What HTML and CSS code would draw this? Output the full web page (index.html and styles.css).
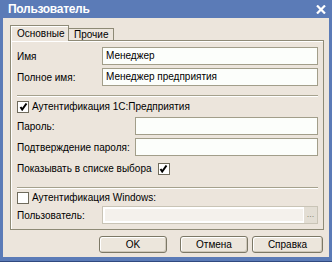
FILE: index.html
```html
<!DOCTYPE html>
<html lang="ru">
<head>
<meta charset="utf-8">
<title>Пользователь</title>
<link rel="stylesheet" href="styles.css">
</head>
<body>
<div class="window">
  <div class="titlebar">
    <span class="title">Пользователь</span>
    <svg class="close" width="10" height="9" viewBox="0 0 10 9"><path d="M1 0.5 L9 8.5 M9 0.5 L1 8.5" stroke="#fff" stroke-width="2.2" fill="none"/></svg>
  </div>
  <div class="client">
    <div class="tabs">
      <div class="tab active">Основные</div>
      <div class="tab">Прочие</div>
    </div>
    <div class="panel">
      <div class="row first">
        <span class="label wide">Имя</span>
        <div class="input">Менеджер</div>
      </div>
      <div class="row">
        <span class="label wide">Полное имя:</span>
        <div class="input">Менеджер предприятия</div>
      </div>
      <div class="sep sep1"></div>
      <div class="check-row cr1">
        <span class="cb"><svg width="9" height="9" viewBox="0 0 9 9"><path d="M1.5 5 L3.2 7.5 L7.5 1.5" stroke="#000" stroke-width="2" fill="none"/></svg></span>
        <span>Аутентификация 1С:Предприятия</span>
      </div>
      <div class="row pw">
        <span class="label wider">Пароль:</span>
        <div class="input"></div>
      </div>
      <div class="row">
        <span class="label wider">Подтверждение пароля:</span>
        <div class="input"></div>
      </div>
      <div class="check-row cr2">
        <span>Показывать в списке выбора</span>
        <span class="cb after"><svg width="9" height="9" viewBox="0 0 9 9"><path d="M1.5 5 L3.2 7.5 L7.5 1.5" stroke="#000" stroke-width="2" fill="none"/></svg></span>
      </div>
      <div class="sep sep2"></div>
      <div class="check-row cr3">
        <span class="cb"></span>
        <span>Аутентификация Windows:</span>
      </div>
      <div class="row user">
        <span class="label wide">Пользователь:</span>
        <div class="input disabled"><span class="fill"></span><span class="dots">...</span></div>
      </div>
    </div>
    <div class="buttons">
      <div class="btn ok">OK</div>
      <div class="btn cancel">Отмена</div>
      <div class="btn help">Справка</div>
    </div>
  </div>
</div>
</body>
</html>
```
FILE: styles.css
```css
html, body {
  margin: 0;
  padding: 0;
  width: 332px;
  height: 262px;
  overflow: hidden;
  font-family: "Liberation Sans", Arial, sans-serif;
  font-size: 10px;
  color: #000;
}

.window {
  width: 332px;
  height: 262px;
  box-sizing: border-box;
  background: #5b7bb7;
  border-bottom: 1px solid #30497f;
  display: flex;
  flex-direction: column;
}

.titlebar {
  height: 18px;
  flex: none;
  display: flex;
  align-items: center;
  justify-content: space-between;
  padding: 0 6px 0 8px;
  color: #fff;
}

.title {
  font-weight: bold;
  font-size: 12px;
  letter-spacing: -0.3px;
}

.close {
  display: block;
  margin-top: 1px;
}

.client {
  flex: 1;
  margin: 0 3px 4px 3px;
  background: #ece5dc;
  display: flex;
  flex-direction: column;
  padding: 7px 5px 4px 7px;
}

.tabs {
  display: flex;
  align-items: flex-end;
  height: 15px;
  flex: none;
}

.tab {
  box-sizing: border-box;
  height: 12px;
  padding: 0 5px 0 5px;
  border: 1px solid #8e8a76;
  border-bottom: none;
  border-left: none;
  line-height: 11px;
  background: #ece5dc;
}

.tab.active {
  position: relative;
  z-index: 1;
  height: 16px;
  width: 59px;
  margin-bottom: -1px;
  border-left: 1px solid #8e8a76;
  box-shadow: inset 1px 1px 0 #fff;
  padding: 2px 0 0 6px;
  line-height: 12px;
}

.panel {
  flex: 1;
  border: 1px solid #8e8a76;
  box-shadow: inset 1px 1px 0 #fff;
  display: flex;
  flex-direction: column;
  padding: 6px 5px 0 6px;
}

.row {
  display: flex;
  align-items: center;
  height: 18px;
  flex: none;
  margin-top: 3px;
}

.row.first { margin-top: 0; }
.row.pw { margin-top: 4px; }
.row.user { margin-top: 2px; }

.label {
  flex: none;
  white-space: nowrap;
}
.label.wide { width: 85px; }
.label.wider { width: 118px; }

.input {
  flex: 1;
  height: 18px;
  box-sizing: border-box;
  border: 1px solid #a29e8a;
  background: #fcfefb;
  padding: 0 3px;
  line-height: 16px;
  white-space: nowrap;
  overflow: hidden;
}

.input.disabled {
  display: flex;
  padding: 0;
  background: #fff;
  border-color: #c9c4b6;
}

.input.disabled .fill {
  flex: 1;
  margin: 1px 0 1px 1px;
  background: #f4f1ec;
  border: 1px solid #fff;
}

.input.disabled .dots {
  width: 13px;
  flex: none;
  background: #e3ded4;
  color: #8a8678;
  font-size: 9px;
  text-align: center;
  line-height: 14px;
}

.sep {
  flex: none;
  height: 0;
  border-top: 1px solid #a5a18d;
  border-bottom: 1px solid #fff;
}
.sep1 { margin-top: 9px; }
.sep2 { margin-top: 12px; }

.check-row {
  display: flex;
  align-items: center;
  height: 13px;
  flex: none;
  white-space: nowrap;
}
.cr1 { margin-top: 3px; }
.cr2 { margin-top: 6px; }
.cr3 { margin-top: 2px; }

.cb {
  width: 12px;
  height: 12px;
  box-sizing: border-box;
  border: 1px solid #6f6b5c;
  background: #fff;
  margin-right: 3px;
  display: flex;
  align-items: center;
  justify-content: center;
  flex: none;
}
.cb.after {
  margin-right: 0;
  margin-left: 6px;
}

.buttons {
  flex: none;
  display: flex;
  justify-content: flex-end;
  margin-top: 6px;
  height: 17px;
  padding-right: 1px;
}

.btn {
  box-sizing: border-box;
  height: 17px;
  border: 1px solid #7c7866;
  border-radius: 3px;
  background: #ece6dc;
  box-shadow: inset -1px -1px 0 #cfc8ba, inset 1px 1px 0 #fff;
  text-align: center;
  line-height: 15px;
}
.btn.ok { width: 68px; }
.btn.cancel { width: 68px; margin-left: 13px; }
.btn.help { width: 71px; margin-left: 4px; }
```
